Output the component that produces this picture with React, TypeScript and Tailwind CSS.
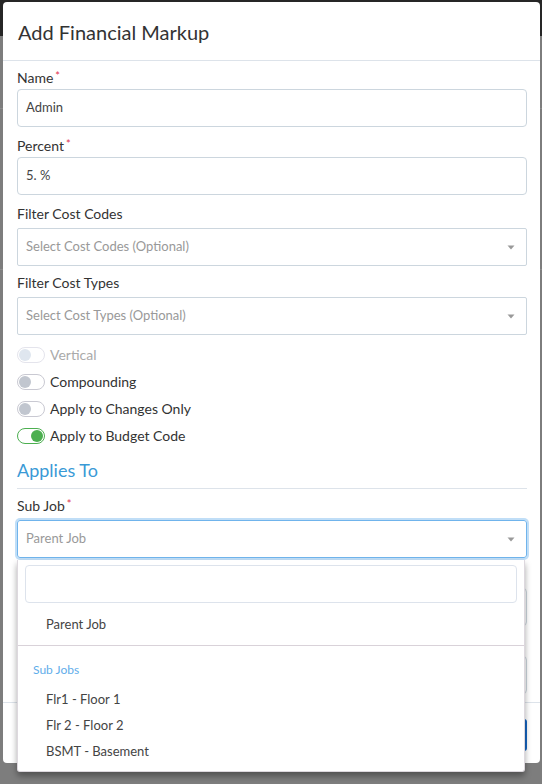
function Caret() {
  return (
    <svg width="8" height="5" viewBox="0 0 8 5" className="shrink-0">
      <path d="M0.5 0.5 L7.5 0.5 L4 4.5 Z" fill="#999" />
    </svg>
  );
}

function Label({ text, required }: { text: string; required?: boolean }) {
  return (
    <div className="h-[20px] leading-[20px] text-[14px] text-[#333]">
      {text}
      {required && <span className="text-[#e0334f] text-[11px] align-top ml-[2px] leading-[16px]">*</span>}
    </div>
  );
}

function TextInput({ value }: { value: string }) {
  return (
    <div className="h-[38px] rounded-[4px] border border-[#ccd6de] flex items-center px-[8px] text-[13px] text-[#444]">
      {value}
    </div>
  );
}

function Select({ placeholder, focused }: { placeholder: string; focused?: boolean }) {
  return (
    <div
      className={
        focused
          ? "h-[38px] rounded-[3px] border border-[#70b4ec] shadow-[0_0_0_2px_rgba(140,195,240,0.55)] flex items-center justify-between pl-[8px] pr-[11px] text-[13px] text-[#999]"
          : "h-[38px] rounded-[2px] border border-[#ccd6de] flex items-center justify-between pl-[8px] pr-[11px] text-[13px] text-[#999]"
      }
    >
      <span>{placeholder}</span>
      <Caret />
    </div>
  );
}

function Toggle({ label, on, disabled }: { label: string; on?: boolean; disabled?: boolean }) {
  const track = on
    ? "border-[#4caf50] justify-end"
    : disabled
      ? "border-[#e4e4ec] justify-start"
      : "border-[#c9c9d2] justify-start";
  const knob = on ? "bg-[#4caf50]" : disabled ? "bg-[#dfe6ef]" : "bg-[#c1c6cf]";
  return (
    <div className="h-[27px] flex items-center gap-[5px]">
      <div className={"w-[28px] h-[16px] rounded-full border bg-white flex items-center px-[1px] " + track}>
        <div className={"w-[12px] h-[12px] rounded-full " + knob} />
      </div>
      <span className={disabled ? "text-[14px] text-[#aaa]" : "text-[14px] text-[#333]"}>{label}</span>
    </div>
  );
}

export default function App() {
  return (
    <div className="relative w-[542px] h-[784px] overflow-hidden bg-[#7d7d7d] font-['Lato','Noto_Sans',sans-serif]">
      <div className="h-[36px] bg-[#262626]" />
      <div className="h-[1px] mt-[72px] bg-[#8c8c8c]" />
      <div className="h-[1px] mt-[160px] bg-[#8c8c8c]" />

      {/* modal */}
      <div className="absolute left-[3px] top-[2px] w-[537px] h-[761px] bg-white rounded-[4px] flex flex-col">
        <div className="h-[59px] border-b border-[#dde3ea] flex items-center px-[15px] pt-[1px]">
          <h2 className="text-[20px] text-[#333] font-normal">Add Financial Markup</h2>
        </div>
        <div className="flex-1 px-[14px] pr-[13px] pt-[7px]">
          <div className="mb-[9px]">
            <div className="mb-[1px]"><Label text="Name" required /></div>
            <TextInput value="Admin" />
          </div>
          <div className="mb-[9px]">
            <div className="mb-[1px]"><Label text="Percent" required /></div>
            <TextInput value="5. %" />
          </div>
          <div className="mb-[7px]">
            <div className="mb-[4px]"><Label text="Filter Cost Codes" /></div>
            <Select placeholder="Select Cost Codes (Optional)" />
          </div>
          <div className="mb-[6px]">
            <div className="mb-[4px]"><Label text="Filter Cost Types" /></div>
            <Select placeholder="Select Cost Types (Optional)" />
          </div>
          <Toggle label="Vertical" disabled />
          <Toggle label="Compounding" />
          <Toggle label="Apply to Changes Only" />
          <Toggle label="Apply to Budget Code" on />
          <div className="mt-[9px] pb-[6px] border-b border-[#dde3ea] h-[31px] flex items-center">
            <span className="text-[18px] text-[#3a9ad6]">Applies To</span>
          </div>
          <div className="mt-[7px] mb-[9px]">
            <div className="mb-[4px]"><Label text="Sub Job" required /></div>
            <Select placeholder="Parent Job" focused />
          </div>
          <div className="mb-[9px]">
            <div className="mb-[1px]"><Label text="Cost Code" /></div>
            <TextInput value="" />
          </div>
          <div>
            <div className="mb-[1px]"><Label text="Cost Type" /></div>
            <TextInput value="" />
          </div>
        </div>
        <div className="h-[61px] border-t border-[#dde3ea] flex items-start justify-end gap-[8px] pt-[16px] pr-[13px]">
          <div className="h-[32px] px-[14px] rounded-[3px] border border-[#ccc] text-[14px] text-[#333] flex items-center">Cancel</div>
          <div className="h-[32px] px-[14px] rounded-[3px] bg-[#1565c0] text-[14px] text-white flex items-center">Save</div>
        </div>
      </div>

      {/* open dropdown */}
      <div className="absolute left-[17px] top-[560px] w-[508px] h-[212px] bg-white border border-[#ddd8de] border-t-0 rounded-b-[3px] shadow-[0_4px_6px_rgba(0,0,0,0.35)]">
        <div className="px-[7px] pt-[5px]">
          <div className="h-[38px] rounded-[4px] border border-[#dde3ec]" />
        </div>
        <div className="h-[43px] flex items-center pl-[28px] pt-[2px] text-[13px] text-[#444] border-b border-[#d9d2d9]">Parent Job</div>
        <div className="pt-[15px] h-[33px] leading-[18px] pl-[15px] text-[12px] text-[#5fadea]">Sub Jobs</div>
        <div className="mt-[8px] h-[26px] flex items-center pl-[28px] text-[13px] text-[#444]">Flr1 - Floor 1</div>
        <div className="h-[26px] flex items-center pl-[28px] text-[13px] text-[#444]">Flr 2 - Floor 2</div>
        <div className="h-[26px] flex items-center pl-[28px] text-[13px] text-[#444]">BSMT - Basement</div>
      </div>
    </div>
  );
}
